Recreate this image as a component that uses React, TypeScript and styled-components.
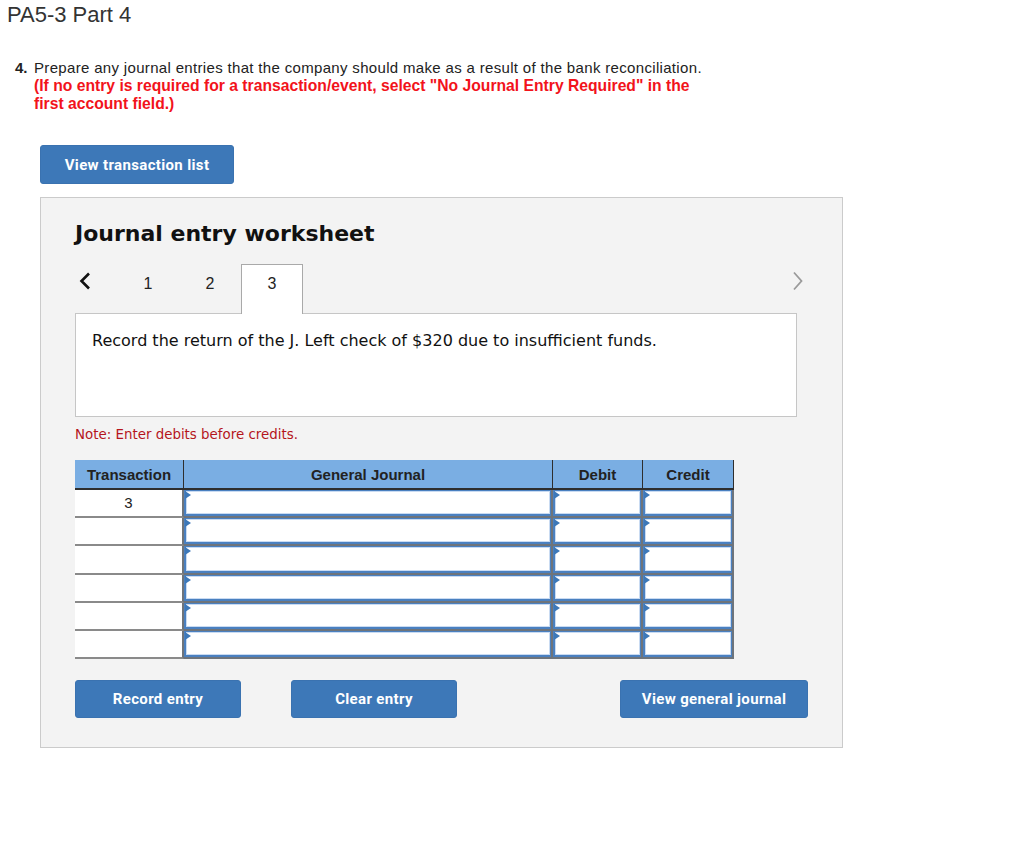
import React from "react";
import styled, { createGlobalStyle } from "styled-components";

const Global = createGlobalStyle`
  html, body { margin: 0; padding: 0; background: #fff; }
  body { font-family: "Liberation Sans", Arial, sans-serif; color: #222; }
  * { box-sizing: border-box; }
`;

const Page = styled.div`
  padding: 4px 0 60px 0;
`;

const Title = styled.h1`
  margin: 0 0 0 7px;
  font-size: 22px;
  line-height: 22px;
  font-weight: 400;
  color: #333;
`;

const Question = styled.div`
  display: flex;
  margin: 33px 0 0 15px;
  font-size: 15px;
  line-height: 18px;
  color: #222;
  letter-spacing: 0.33px;
`;

const Num = styled.span`
  font-weight: 700;
  width: 19px;
  flex: none;
  letter-spacing: 0;
`;

const Instruction = styled.span`
  display: block;
  color: #f2131b;
  font-weight: 700;
  font-size: 15.7px;
  width: 668px;
  letter-spacing: 0;
`;

const BlueButton = styled.button<{ $w: number }>`
  width: ${(p) => p.$w}px;
  height: 38px;
  background: #3d78b8;
  border: 1px solid #3a72b0;
  border-radius: 3px;
  color: #fff;
  font-family: Roboto, "Liberation Sans", sans-serif;
  font-weight: 700;
  font-size: 15px;
  letter-spacing: 0.35px;
  padding: 0;
  cursor: pointer;
`;

const TopButtonWrap = styled.div`
  margin: 32px 0 0 40px;
  & > button { height: 39px; }
`;

const Panel = styled.section`
  margin: 13px 0 0 40px;
  width: 803px;
  height: 551px;
  background: #f3f3f3;
  border: 1px solid #cbcbcb;
  padding: 24px 34px 0 34px;
`;

const Heading = styled.h2`
  margin: 0;
  font-family: "DejaVu Sans", Verdana, sans-serif;
  font-weight: 700;
  font-size: 22px;
  line-height: 24px;
  color: #111;
`;

const TabRow = styled.div`
  display: flex;
  align-items: flex-end;
  margin-top: 18px;
  height: 49px;
  position: relative;
  z-index: 1;
`;

const Arrow = styled.span<{ $dim?: boolean }>`
  width: 42px;
  height: 34px;
  display: flex;
  align-items: center;
  justify-content: ${(p) => (p.$dim ? "flex-end" : "flex-start")};
  padding-left: ${(p) => (p.$dim ? "0" : "3px")};
  margin-left: ${(p) => (p.$dim ? "auto" : "0")};
  margin-right: ${(p) => (p.$dim ? "3px" : "0")};
  align-self: flex-start;
`;

const Tab = styled.span<{ $active?: boolean }>`
  width: 62px;
  height: ${(p) => (p.$active ? "50px" : "49px")};
  display: flex;
  justify-content: center;
  padding-top: 10px;
  font-size: 16px;
  color: #222;
  background: ${(p) => (p.$active ? "#fff" : "transparent")};
  border: 1px solid ${(p) => (p.$active ? "#a9a9a9" : "transparent")};
  border-bottom: none;
  margin-bottom: ${(p) => (p.$active ? "-1px" : "0")};
`;

const Prompt = styled.div`
  width: 722px;
  height: 104px;
  background: #fff;
  border: 1px solid #c6c6c6;
  padding: 17px 0 0 16px;
  font-family: "DejaVu Sans", Verdana, sans-serif;
  font-size: 16px;
  line-height: 20px;
  color: #111;
`;

const Note = styled.div`
  margin-top: 9px;
  font-family: "DejaVu Sans", Verdana, sans-serif;
  font-size: 13.4px;
  line-height: 18px;
  color: #b5151c;
`;

const Table = styled.div`
  margin-top: 16px;
  width: 659px;
  display: grid;
  grid-template-columns: 109px 369px 90px 91px;
  grid-template-rows: 30px repeat(6, 28.2px);
`;

const Th = styled.div`
  background: #7aaee3;
  display: flex;
  align-items: center;
  justify-content: center;
  font-weight: 700;
  font-size: 15px;
  color: #222;
  border-bottom: 2px solid #2e2e2e;
  border-right: 1px solid #2e2e2e;
`;

const TxCell = styled.div`
  background: #fff;
  border-bottom: 2px solid #8a8a8a;
  border-right: 2px solid #6e747b;
  display: flex;
  justify-content: center;
  padding-top: 4px;
  font-size: 15px;
  color: #222;
`;

const InputCell = styled.div`
  position: relative;
  border-right: 2px solid #6e747b;
  border-bottom: 2px solid #6e747b;
  background: #fff;
`;

const Field = styled.div`
  height: 100%;
  border: 1px solid #4a80c0;
  border-left-width: 2px;
  border-bottom-width: 2px;
  box-shadow: inset 0 0 0 1px #c9dbf2;
  background: #fff;
`;

const Marker = styled.span`
  position: absolute;
  left: 1px;
  top: 1px;
  width: 0;
  height: 0;
  border-top: 4px solid transparent;
  border-bottom: 4px solid transparent;
  border-left: 6px solid #3d78b8;
`;

const ButtonRow = styled.div`
  display: flex;
  gap: 50px;
  margin-top: 21px;
  & > button:last-child { margin-left: auto; }
`;

const Chevron = ({ dir, color }: { dir: "left" | "right"; color: string }) => (
  <svg width="14" height="20" viewBox="0 0 14 20">
    {dir === "left" ? (
      <path d="M11 2.5 L3.5 10 L11 17.5" fill="none" stroke={color} strokeWidth="2.6" />
    ) : (
      <path d="M3 1.5 L10.5 10 L3 18.5" fill="none" stroke={color} strokeWidth="1.8" />
    )}
  </svg>
);

const rows = ["3", "", "", "", "", ""];

export default function App() {
  return (
    <Page>
      <Global />
      <Title>PA5-3 Part 4</Title>
      <Question>
        <Num>4.</Num>
        <div>
          Prepare any journal entries that the company should make as a result of the bank reconciliation.
          <Instruction>
            (If no entry is required for a transaction/event, select "No Journal Entry Required" in the first
            account field.)
          </Instruction>
        </div>
      </Question>
      <TopButtonWrap>
        <BlueButton $w={194}>View transaction list</BlueButton>
      </TopButtonWrap>
      <Panel>
        <Heading>Journal entry worksheet</Heading>
        <TabRow>
          <Arrow>
            <Chevron dir="left" color="#111" />
          </Arrow>
          <Tab>1</Tab>
          <Tab>2</Tab>
          <Tab $active>3</Tab>
          <Arrow $dim>
            <Chevron dir="right" color="#9a9a9a" />
          </Arrow>
        </TabRow>
        <Prompt>Record the return of the J. Left check of $320 due to insufficient funds.</Prompt>
        <Note>Note: Enter debits before credits.</Note>
        <Table>
          <Th>Transaction</Th>
          <Th>General Journal</Th>
          <Th>Debit</Th>
          <Th>Credit</Th>
          {rows.map((r, i) => (
            <React.Fragment key={i}>
              <TxCell>{r}</TxCell>
              {[0, 1, 2].map((c) => (
                <InputCell key={c}>
                  <Field />
                  <Marker />
                </InputCell>
              ))}
            </React.Fragment>
          ))}
        </Table>
        <ButtonRow>
          <BlueButton $w={166}>Record entry</BlueButton>
          <BlueButton $w={166}>Clear entry</BlueButton>
          <BlueButton $w={188}>View general journal</BlueButton>
        </ButtonRow>
      </Panel>
    </Page>
  );
}
